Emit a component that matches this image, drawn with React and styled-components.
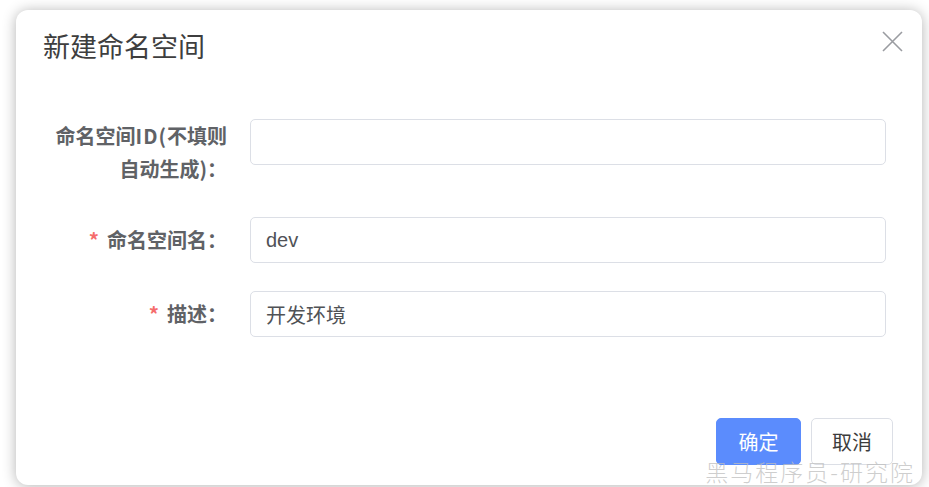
import React from "react";
import styled, { createGlobalStyle } from "styled-components";

const GlobalStyle = createGlobalStyle`
  html, body {
    margin: 0;
    padding: 0;
    background: #ffffff;
    overflow: hidden;
  }
  body {
    font-family: "Noto Sans CJK SC", "Noto Sans", sans-serif;
  }
  * { box-sizing: border-box; }
`;

const Page = styled.div`
  width: 929px;
  height: 487px;
  padding: 10px 7px 0 16px;
`;

const Dialog = styled.div`
  position: relative;
  width: 906px;
  height: 475px;
  background: #fff;
  border-radius: 12px;
  box-shadow: 0 1px 14px rgba(0, 0, 0, 0.3);
  display: flex;
  flex-direction: column;
`;

const Header = styled.div`
  display: flex;
  align-items: center;
  justify-content: space-between;
  padding: 21px 19px 0 27px;
  height: 51px;
`;

const Title = styled.h2`
  margin: 0;
  font-size: 27px;
  line-height: 30px;
  font-weight: 400;
  color: #3e3e3e;
`;

const CloseButton = styled.button`
  border: none;
  background: transparent;
  padding: 0;
  width: 22px;
  height: 22px;
  display: flex;
  align-items: center;
  justify-content: center;
  cursor: pointer;
  margin-top: -9px;
`;

const Body = styled.div`
  padding: 58px 36px 0 24px;
  display: flex;
  flex-direction: column;
`;

const Row = styled.div`
  display: flex;
  align-items: flex-start;
  margin-bottom: ${(p) => p.$mb}px;
`;

const Label = styled.label`
  width: 187px;
  margin-right: 23px;
  flex: none;
  text-align: right;
  font-size: 20px;
  font-weight: 700;
  color: #606266;
  line-height: ${(p) => (p.$multi ? "33px" : "46px")};
`;

const Latin = styled.span`
  letter-spacing: 1px;
`;

const Star = styled.span`
  color: #f56c6c;
  margin-right: 8px;
  font-weight: 700;
`;

const Input = styled.input`
  flex: 1;
  height: 46px;
  border: 1px solid #dcdfe6;
  border-radius: 5px;
  padding: 0 15px;
  font-size: 20px;
  font-family: "Liberation Sans", "Noto Sans CJK SC", sans-serif;
  color: #505256;
  outline: none;
  background: #fff;
`;

const Footer = styled.div`
  margin-top: auto;
  display: flex;
  justify-content: flex-end;
  gap: 10px;
  padding: 0 29px 20px 0;
`;

const Button = styled.button`
  height: 47px;
  width: ${(p) => p.$w}px;
  border-radius: 5px;
  font-size: 20px;
  font-family: "Noto Sans CJK SC", sans-serif;
  cursor: pointer;
  border: 1px solid ${(p) => (p.$primary ? "#5b8cfd" : "#dcdfe6")};
  background: ${(p) => (p.$primary ? "#5b8cfd" : "#fff")};
  color: ${(p) => (p.$primary ? "#fff" : "#3c3c3c")};
  padding: 0;
`;

const Watermark = styled.div`
  position: absolute;
  right: 7px;
  bottom: 0px;
  font-family: "Noto Sans CJK SC", serif;
  font-size: 23px;
  line-height: 28px;
  font-weight: 300;
  letter-spacing: 2px;
  color: rgba(190, 190, 190, 0.75);
  pointer-events: none;
  white-space: nowrap;
`;

export default function App() {
  return (
    <>
      <GlobalStyle />
      <Page>
        <Dialog>
          <Header>
            <Title>新建命名空间</Title>
            <CloseButton aria-label="close">
              <svg width="21" height="21" viewBox="0 0 21 21">
                <path d="M1 1 L20 20 M20 1 L1 20" stroke="#9a9ca1" strokeWidth="1.6" fill="none" />
              </svg>
            </CloseButton>
          </Header>
          <Body>
            <Row $mb={32}>
              <Label $multi>
                命名空间<Latin>ID(</Latin>不填则
                <br />
                自动生成)：
              </Label>
              <Input defaultValue="" />
            </Row>
            <Row $mb={28}>
              <Label>
                <Star>*</Star>命名空间名：
              </Label>
              <Input defaultValue="dev" />
            </Row>
            <Row $mb={28}>
              <Label>
                <Star>*</Star>描述：
              </Label>
              <Input defaultValue="开发环境" />
            </Row>
          </Body>
          <Footer>
            <Button $primary $w={85}>确定</Button>
            <Button $w={82}>取消</Button>
          </Footer>
          <Watermark>黑马程序员-研究院</Watermark>
        </Dialog>
      </Page>
    </>
  );
}
